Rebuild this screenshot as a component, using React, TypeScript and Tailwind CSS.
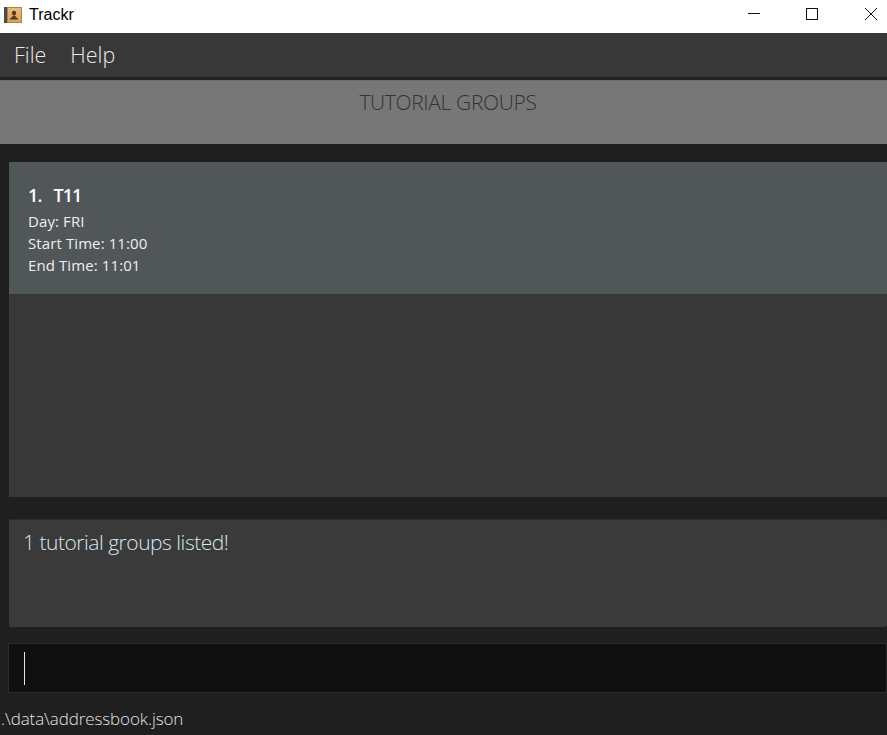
export default function App() {
  const font = { fontFamily: '"Open Sans", "Noto Sans", sans-serif' };
  return (
    <div className="flex h-[735px] w-[887px] flex-col overflow-hidden bg-[#1f1f1f]" style={font}>
      <div className="flex h-[33px] shrink-0 items-center bg-white">
        <svg width="18" height="17" viewBox="0 0 18 17" className="mb-[3px] ml-[4px]">
          <defs>
            <linearGradient id="face" x1="0" y1="0" x2="0" y2="1">
              <stop offset="0" stopColor="#e8bb78" />
              <stop offset="1" stopColor="#dc9f50" />
            </linearGradient>
          </defs>
          <rect x="0" y="0" width="3" height="16" fill="#54493f" />
          <rect x="3" y="0" width="15" height="16" fill="#a98650" />
          <rect x="4" y="1" width="13" height="14" fill="url(#face)" />
          <circle cx="10" cy="6" r="2.2" fill="#4d3b27" />
          <path d="M6 12.5 H14 V11.5 Q11.5 10.5 11 8.5 H9 Q8.5 10.5 6 11.5 Z" fill="#4d3b27" />
        </svg>
        <span className="mb-[3px] ml-[7px] font-['Liberation_Sans',sans-serif] text-[16px] text-black">Trackr</span>
        <div className="mb-auto ml-auto flex pt-[7px]">
          <svg width="14" height="14" viewBox="0 0 14 14" className="mr-[44px]">
            <path d="M1 6.5 H13" stroke="#111" strokeWidth="1" fill="none" />
          </svg>
          <svg width="14" height="14" viewBox="0 0 14 14" className="mr-[45px]">
            <rect x="1.5" y="1.5" width="11" height="11" stroke="#111" strokeWidth="1" fill="none" />
          </svg>
          <svg width="14" height="14" viewBox="0 0 14 14" className="mr-[9px]">
            <path d="M1 1 L13 13 M13 1 L1 13" stroke="#111" strokeWidth="1" fill="none" />
          </svg>
        </div>
      </div>

      <div className="flex h-[44px] shrink-0 items-center gap-[24px] bg-[#383838] pl-[14px] text-[21.5px] font-light text-[#e8e8e8]">
        <span>File</span>
        <span>Help</span>
      </div>
      <div className="h-[3px] shrink-0 bg-[#212121]" />

      <div className="flex h-[64px] shrink-0 justify-center border-t border-[#6c6c6c] bg-[#777777] pt-[7px] pl-[9px] text-[21px] leading-[28px] font-light text-[#333333]">
        <span className="tracking-[-0.35px]">TUTORIAL GROUPS</span>
      </div>

      <div className="mt-[18px] ml-[9px] flex h-[335px] shrink-0 flex-col bg-[#383838]">
        <div className="flex h-[132px] flex-col bg-[#515658] pt-[20px] pl-[19px] text-[#eeeeee]">
          <div className="text-[18px] leading-[26px] font-semibold tracking-[-0.9px] text-white">
            <span>1.</span>
            <span className="ml-[12px]">T11</span>
          </div>
          <div className="mt-[2px] text-[15px] leading-[22px] tracking-[0.1px]">Day: FRI</div>
          <div className="text-[15px] leading-[22px] tracking-[0.1px]">Start Time: 11:00</div>
          <div className="text-[15px] leading-[22px] tracking-[0.1px]">End Time: 11:01</div>
        </div>
      </div>

      <div className="mt-[22px] ml-[9px] h-[108px] shrink-0 rounded-[2px] border-t border-[#2b2b2b] bg-[#3a3a3a] pt-[8px] pl-[14px] text-[21px] leading-[29px] font-light tracking-[-0.48px] text-[#d8e6ee]">
        1 tutorial groups listed!
      </div>

      <div className="mt-[16px] ml-[8px] flex h-[50px] shrink-0 items-center border border-[#2c2c2c] bg-[#0f0f0f] pl-[15px]">
        <div className="h-[33px] w-[1px] bg-[#e6e6e6]" />
      </div>

      <div className="mt-[15px] pl-[1px] text-[17px] leading-[22px] font-light tracking-[-0.1px] text-[#e2e2e2]">
        .\data\addressbook.json
      </div>
    </div>
  );
}
